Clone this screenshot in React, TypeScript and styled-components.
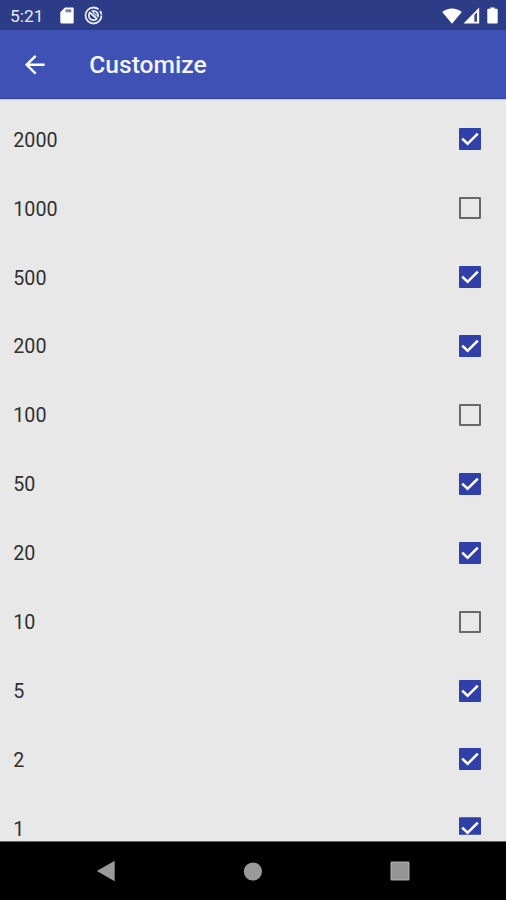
import React, { useState } from "react";
import styled, { createGlobalStyle } from "styled-components";

const GlobalStyle = createGlobalStyle`
  * { box-sizing: border-box; }
  body { margin: 0; background: #e8e8e8; font-family: Roboto, "Liberation Sans", sans-serif; }
  svg { display: block; flex: none; }
`;

const Screen = styled.div`
  width: 506px;
  height: 900px;
  display: flex;
  flex-direction: column;
  overflow: hidden;
  background: #e8e8e8;
`;

const StatusBar = styled.header`
  height: 29.5px;
  flex: none;
  display: flex;
  align-items: center;
  padding: 1.5px 8px 0 10px;
  background: #2c3c86;
  color: #e6e9f6;
`;

const Clock = styled.span`
  width: 48px;
  font-size: 17.4px;
  line-height: 20px;
`;

const StatusIcons = styled.div<{ $end?: boolean }>`
  display: flex;
  align-items: center;
  gap: ${(p) => (p.$end ? "1px" : "10.5px")};
  margin-left: ${(p) => (p.$end ? "auto" : "1.5px")};
`;

const Toolbar = styled.div`
  height: 69.5px;
  flex: none;
  display: flex;
  align-items: center;
  padding-left: 20.3px;
  gap: 39.5px;
  background: #3f51b5;
  border-bottom: 1px solid #33439f;
  box-shadow: 0 1px 1px #c9cacb;
`;

const BackButton = styled.button`
  padding: 1px 0 0;
  border: 0;
  background: none;
  color: #fff;
`;

const Title = styled.h1`
  margin: 0;
  padding-top: 3px;
  font-size: 24.6px;
  line-height: 30px;
  font-weight: 500;
  color: #f3f4fc;
`;

const List = styled.main`
  height: 736px;
  flex: none;
  margin-top: 6px;
  overflow: hidden;
`;

const Row = styled.div`
  height: 68.9px;
  display: flex;
  align-items: center;
  justify-content: space-between;
  padding: 0 25px 0 13.3px;
`;

const Amount = styled.span`
  padding-top: 2.6px;
  font-size: 19.7px;
  line-height: 18px;
  color: #303030;
`;

const CheckBox = styled.button<{ $on: boolean; $clipped: boolean }>`
  width: 22px;
  height: 22px;
  padding: 0;
  display: grid;
  place-items: center;
  border: 2px solid ${(p) => (p.$on ? "#3040a8" : "#696969")};
  border-radius: 1px;
  background: ${(p) => (p.$on ? "#3040a8" : "transparent")};
  clip-path: ${(p) => (p.$clipped ? "inset(0 0 4.5px 0)" : "none")};
`;

const NavBar = styled.nav`
  flex: 1;
  display: flex;
  align-items: center;
  justify-content: space-between;
  padding: 0 96.5px 0 96px;
  background: #000;
  border-top: 1px solid #666;
`;

const amounts: [number, boolean][] = [
  [2000, true],
  [1000, false],
  [500, true],
  [200, true],
  [100, false],
  [50, true],
  [20, true],
  [10, false],
  [5, true],
  [2, true],
  [1, true],
];

const SdCardIcon = () => (
  <svg width="14" height="17" viewBox="0 0 14 17">
    <path d="M5 .5h7.5c.8 0 1.2.5 1.2 1.2v13.6c0 .8-.5 1.2-1.2 1.2h-11c-.8 0-1.2-.5-1.2-1.2V5.2z" fill="#fff" />
    <path d="M5.5 2.3h5.8v3H5.5z" fill="#7a83a6" />
  </svg>
);

const SyncIcon = () => (
  <svg width="19" height="19" viewBox="0 0 19 19" fill="none" stroke="#e8ebf7">
    <circle cx="9.5" cy="9.5" r="8" strokeWidth="1.8" strokeDasharray="43 2 4 1.3" />
    <path d="M6.2 6.2a4.6 4.6 0 1 0 6.6 6.6M7.8 5.2a4.6 4.6 0 0 1 6 5.8" strokeWidth="1.8" />
    <path d="M5.5 6.2 13.2 13" strokeWidth="2" />
    <path d="M8.8 6.3 12.6 9.6" strokeWidth="1.2" />
  </svg>
);

const WifiIcon = () => (
  <svg width="20" height="16" viewBox="0 0 20 16">
    <path d="M.2 4.1C5.8-.7 14.2-.7 19.8 4.1L10 15.8z" fill="#fff" />
  </svg>
);

const SignalIcon = () => (
  <svg width="17" height="17" viewBox="0 0 17 17">
    <path d="M16.2.5v16H.5z" fill="#fff" />
    <path d="M11.3 8 14 5.3v9.4h-2.7z" fill="#3c4a8e" />
  </svg>
);

const BatteryIcon = () => (
  <svg width="11" height="17" viewBox="0 0 11 17">
    <path d="M3.3.4h4.4v1.4h1.8c.8 0 1.2.4 1.2 1.2v12.3c0 .8-.4 1.2-1.2 1.2h-8c-.8 0-1.2-.4-1.2-1.2V3c0-.8.4-1.2 1.2-1.2h1.8z" fill="#fff" />
  </svg>
);

const BatterySlot = styled.div`
  margin-left: 6px;
`;

export default function App() {
  const [items, setItems] = useState(amounts);
  const toggle = (index: number) =>
    setItems(items.map(([value, on], i) => [value, i === index ? !on : on]));

  return (
    <>
      <GlobalStyle />
      <Screen>
        <StatusBar>
          <Clock>5:21</Clock>
          <StatusIcons>
            <SdCardIcon />
            <SyncIcon />
          </StatusIcons>
          <StatusIcons $end>
            <WifiIcon />
            <SignalIcon />
            <BatterySlot>
              <BatteryIcon />
            </BatterySlot>
          </StatusIcons>
        </StatusBar>
        <Toolbar>
          <BackButton aria-label="Back">
            <svg width="29.5" height="29.5" viewBox="0 0 24 24">
              <path d="M20 11H7.83l5.59-5.59L12 4l-8 8 8 8 1.41-1.41L7.83 13H20v-2z" fill="currentColor" />
            </svg>
          </BackButton>
          <Title>Customize</Title>
        </Toolbar>
        <List>
          {items.map(([value, on], i) => (
            <Row key={value}>
              <Amount>{value}</Amount>
              <CheckBox
                $on={on}
                $clipped={i === items.length - 1}
                role="checkbox"
                aria-checked={on}
                aria-label={String(value)}
                onClick={() => toggle(i)}
              >
                {on && (
                  <svg width="18" height="18" viewBox="0 0 18 18">
                    <path d="M1.2 8.6 6.6 13.8 16.8 3.6" fill="none" stroke="#fff" strokeWidth="2.6" />
                  </svg>
                )}
              </CheckBox>
            </Row>
          ))}
        </List>
        <NavBar>
          <svg width="19" height="22" viewBox="0 0 19 22">
            <path d="M18.7.8v20.4L.8 11z" fill="#9a9a9a" />
          </svg>
          <svg width="19" height="19" viewBox="0 0 19 19">
            <circle cx="9.9" cy="9.5" r="9.1" fill="#9a9a9a" />
          </svg>
          <svg width="20" height="20" viewBox="0 0 20 20">
            <rect x=".5" y=".5" width="19" height="19" rx="1.2" fill="#a6a6a6" />
            <rect x="2" y="2" width="16" height="16" fill="#959595" />
          </svg>
        </NavBar>
      </Screen>
    </>
  );
}
